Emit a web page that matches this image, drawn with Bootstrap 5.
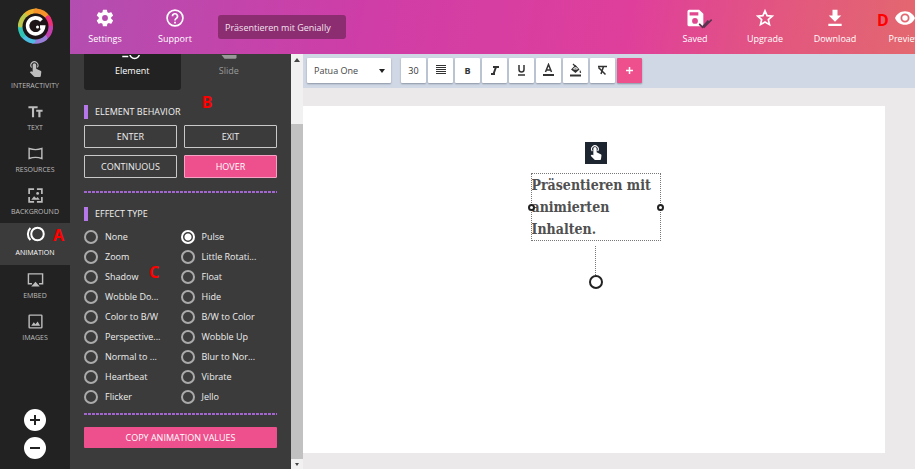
<!DOCTYPE html>
<html lang="en">
<head>
<meta charset="utf-8">
<meta name="viewport" content="width=device-width, initial-scale=1">
<title>Präsentieren mit Genially</title>
<link href="https://cdn.jsdelivr.net/npm/bootstrap@5.3.0/dist/css/bootstrap.min.css" rel="stylesheet">
<style>
body{font-family:"Open Sans","Noto Sans",sans-serif;font-size:9px;line-height:14px;background:#ebe9ea;color:#eee}
.btn{font-size:9px;line-height:14px}
svg{display:block;fill:none;stroke:currentColor;stroke-width:2}
svg .solid{fill:currentColor;stroke:none}
.rail{width:70px;background:#222}
.logo{height:55px}
.rail-item{height:42px;padding-top:6px;color:#bdbdbd;font-size:7px;line-height:10px;text-decoration:none;gap:3px}
.rail-item svg{height:17px}
.rail-item.current{background:#3b3b3b;color:#fff;gap:4px;padding-top:1px}
.rail-item.current svg{height:20px}
.zooms{gap:6px;padding-bottom:10px}
.zoom-btn{width:22px;height:22px;background:#fff;color:#222}
.topbar{height:54px;background:linear-gradient(100deg,#b34eb0 0%,#cf3da7 35%,#df3f9b 66%,#e2577f 84%,#e3686f 100%)}
.top-item{width:70px;height:54px;color:#fff;text-decoration:none;padding-top:8px;gap:4px}
.top-end{margin-right:-25px}
.doc-title{width:128px;height:24px;border:0;border-radius:3px;background:#8b2d70;color:#f5e3f0;padding:0 7px;margin-left:8px}
.note{position:absolute;color:#f00;font:bold 16px/16px "Noto Sans",sans-serif}
.note-a{left:53px;top:4px}
.note-b{right:-32px;top:-11px}
.note-c{left:65px;top:37px}
.note-d{left:7px;top:12px}
.panel{width:221px;background:#3b3b3b;padding:0 14px}
.tab-btn{height:36px;color:#999;padding:0 0 11px;gap:3px}
.tab-btn.chosen{background:#222;color:#fff;border-radius:0 0 3px 3px}
.tab-btn svg{height:8px}
.sect{font-size:9px;line-height:14px;border-left:4px solid #b677ea;padding-left:7px;color:#f0f0f0}
.sect-top{margin-top:15px}
.behaviors{gap:7px}
.behaviors-top{margin-top:6px}
.line-btn{height:23px;border:1px solid #c9c9c9;border-radius:1px;color:#eee}
.pink{background:#ee4f8d;color:#fff}
.line-btn.pink{border-color:#f7a2c4}
.dashes{height:2px;background:repeating-linear-gradient(90deg,#a266cf 0 3px,transparent 3px 4px)}
.dashes-top{margin:13px 0 14px}
.dashes-end{margin:6px 0 12px}
.effects{display:grid;grid-template-columns:1fr 1fr}
.effects label{height:20px;gap:7px}
.effects input{appearance:none;width:14px;height:14px;border:2px solid #aaa;border-radius:50%;margin:0}
.effects input:checked{border-color:#fff;background:radial-gradient(#fff 3px,transparent 4px)}
.sect-fx{margin-bottom:6px}
.copy-btn{height:21px;border-radius:1px}
.track{width:12px;background:#f1f1f1;color:#444}
.thumb{background:#c1c1c1;margin-top:60px}
.track svg{width:12px;height:10px}
.tools{height:34px;background:#d0d8e5;padding:4px;gap:2px}
.tool{width:25px;height:25px;background:#fff;color:#333;border-radius:1px;box-shadow:0 1px 2px #8a93a3;line-height:24px}
.tool svg{width:15px;height:15px}
.tool.pink{background:#ee4f8d;color:#fff}
.font-pick{width:84px;height:25px;border:0;border-radius:1px;box-shadow:0 1px 2px #8a93a3;color:#444;padding:0 7px;appearance:none;background:#fff}
.picker::after{content:"";position:absolute;right:6px;top:11px;border:3px solid transparent;border-top:4px solid #222;border-bottom:0;pointer-events:none}
.slide{margin:18px 30px 16px 0;padding:36px 0 0 3px}
.touch{width:22px;height:22px;background:#1d2530;color:#fff}
.text-box{width:130px;margin-top:9px;border:1px dotted #777;color:#505050;font:bold 14px/22px "DejaVu Serif Condensed","DejaVu Serif",serif}
.grip{position:absolute;top:50%;width:7px;height:7px;margin-top:-3px;border:2px solid #222;border-radius:50%;background:#fff}
.grip-l{left:-4px}
.grip-r{right:-4px}
.stem{height:29px;border-left:1px dotted #777;margin-top:5px}
.spin{width:14px;height:14px;border:2px solid #222;border-radius:50%}
</style>
</head>
<body class="d-flex vh-100 overflow-hidden">
<svg width="0" height="0" class="position-absolute" aria-hidden="true">
  <symbol id="hand" viewBox="0 0 24 24"><path class="solid" d="M8 10V5.500a2.500 2.500 0 0 1 5 0V11l6 2.700c1 .5 1.300 1 1.200 2L19.500 21c-.2 1-.8 1.600-2 1.600h-6c-1 0-1.500-.4-2-1L4 16l1-1c.4-.4.9-.4 1.400-.3L8 15.200z"/><path d="M6.500 9.200a5 5 0 1 1 8-.2" stroke-width="1.600"/></symbol>
</svg>

<nav class="rail d-flex flex-column flex-shrink-0" aria-label="Tools">
  <a href="#" class="logo d-flex justify-content-center pt-2" aria-label="Genially">
    <svg width="37" height="37" viewBox="0 0 37 37">
      <g stroke-width="5" stroke-linecap="round">
        <path d="M8 8A15 15 0 0 1 19 3" stroke="#f0b02e"/><path d="M19 3A15 15 0 0 1 31 10" stroke="#f7932a"/>
        <path d="M31 10A15 15 0 0 1 33.500 20" stroke="#ec2f77"/><path d="M33.500 20A15 15 0 0 1 28 30" stroke="#c43fae"/>
        <path d="M28 30A15 15 0 0 1 16 33" stroke="#977fd8"/><path d="M16 33A15 15 0 0 1 6 27" stroke="#4bbde0"/>
        <path d="M6 27A15 15 0 0 1 3.500 17" stroke="#2fc3b5"/><path d="M3.500 17A15 15 0 0 1 8 8" stroke="#bcc849"/>
      </g>
      <circle cx="18.500" cy="18.500" r="13" fill="#1d1418" stroke="none"/>
      <path d="M24.500 12.500A8 8 0 1 0 26.500 19H23" stroke="#fff" stroke-width="3.600"/><circle cx="20.500" cy="19" r="1.500" fill="#fff" stroke="none"/>
    </svg>
  </a>
  <a href="#" class="rail-item d-flex flex-column align-items-center"><svg width="17" viewBox="0 0 24 24"><use href="#hand"/></svg>INTERACTIVITY</a>
  <a href="#" class="rail-item d-flex flex-column align-items-center"><svg width="17" viewBox="0 0 24 24"><path stroke-width="3" d="M2 6h13M8.500 6v14M13 11h9M17.500 11v9"/></svg>TEXT</a>
  <a href="#" class="rail-item d-flex flex-column align-items-center"><svg width="17" viewBox="0 0 24 24"><path d="M3 5q9 3 18 0v14q-9-3-18 0z"/></svg>RESOURCES</a>
  <a href="#" class="rail-item d-flex flex-column align-items-center"><svg width="17" viewBox="0 0 24 24"><path stroke-width="2.400" d="M10 3H3v7M14 3h7v7M3 14v7h7M21 14v7h-7"/><path class="solid" d="m6 18 4-5 3 3 2-2 3 4z"/><circle class="solid" cx="15" cy="9" r="2"/></svg>BACKGROUND</a>
  <div class="position-relative">
    <a href="#" class="rail-item current d-flex flex-column align-items-center" aria-current="page"><svg width="20" viewBox="0 0 24 24"><circle cx="15" cy="12" r="7.500" stroke-width="2.400"/><path stroke-width="2.400" d="M6.500 4.800a10 10 0 0 0 0 14.400"/></svg>ANIMATION</a>
    <span class="note note-a">A</span>
  </div>
  <a href="#" class="rail-item d-flex flex-column align-items-center"><svg width="17" viewBox="0 0 24 24"><path d="M7 18H2V4h20v14h-5"/><path class="solid" d="m6 22 6-7 6 7z"/></svg>EMBED</a>
  <a href="#" class="rail-item d-flex flex-column align-items-center"><svg width="17" viewBox="0 0 24 24"><rect x="3" y="3" width="18" height="18" rx="1"/><path class="solid" d="m6 18 3.500-5 2.500 3 3-4 3.500 6z"/></svg>IMAGES</a>
  <div class="zooms mt-auto d-flex flex-column align-items-center">
    <button class="btn zoom-btn rounded-circle p-0 d-flex align-items-center justify-content-center" aria-label="Zoom in"><svg width="12" height="12" viewBox="0 0 12 12"><path d="M6 1v10M1 6h10"/></svg></button>
    <button class="btn zoom-btn rounded-circle p-0 d-flex align-items-center justify-content-center" aria-label="Zoom out"><svg width="12" height="12" viewBox="0 0 12 12"><path d="M1 6h10"/></svg></button>
  </div>
</nav>

<div class="d-flex flex-column flex-grow-1 overflow-hidden">
  <header class="topbar d-flex align-items-center flex-shrink-0 overflow-hidden">
    <a href="#" class="top-item d-flex flex-column align-items-center"><svg width="20" height="20" viewBox="0 0 24 24"><path class="solid" fill-rule="evenodd" d="M19.400 13a7.500 7.500 0 0 0 0-2l2.100-1.700a.5.500 0 0 0 .1-.6l-2-3.500a.5.500 0 0 0-.6-.2l-2.500 1a7.300 7.300 0 0 0-1.700-1l-.4-2.600a.5.500 0 0 0-.5-.4h-4a.5.500 0 0 0-.5.400L9 5a7.300 7.300 0 0 0-1.700 1l-2.500-1a.5.500 0 0 0-.6.200l-2 3.500a.5.500 0 0 0 .1.600L4.500 11a7.500 7.500 0 0 0 0 2l-2.200 1.700a.5.500 0 0 0-.1.600l2 3.500c.1.200.4.300.6.200l2.500-1c.5.400 1.100.7 1.700 1l.4 2.600c0 .2.200.4.500.4h4c.3 0 .5-.2.500-.4l.4-2.600a7.300 7.300 0 0 0 1.700-1l2.500 1c.2.100.5 0 .6-.2l2-3.500a.5.500 0 0 0-.1-.6zM12 15.500a3.500 3.500 0 1 1 0-7 3.500 3.500 0 0 1 0 7z"/></svg>Settings</a>
    <a href="#" class="top-item d-flex flex-column align-items-center"><svg width="20" height="20" viewBox="0 0 24 24"><circle cx="12" cy="12" r="9.500"/><path d="M9 10a3 3 0 1 1 4.500 2.500Q12 13.500 12 15M12 16.500v2"/></svg>Support</a>
    <input class="doc-title" type="text" value="Präsentieren mit Genially" aria-label="Title">
    <div class="top-end d-flex flex-shrink-0 ms-auto">
      <a href="#" class="top-item d-flex flex-column align-items-center"><svg width="20" height="20" viewBox="0 0 24 24" overflow="visible"><path class="solid" fill-rule="evenodd" d="M5 2h12l5 5v13a2 2 0 0 1-2 2H5a2 2 0 0 1-2-2V4q0-2 2-2zM5.500 5v4H16V5zM12 12a3.500 3.500 0 1 0 0 7 3.500 3.500 0 0 0 0-7z"/><path d="m17 19 4 4 7-8M22 22l1 1 9-9" stroke="#5c3350"/></svg>Saved</a>
      <a href="#" class="top-item d-flex flex-column align-items-center"><svg width="20" height="20" viewBox="0 0 24 24"><path d="m12 3.500 2.500 5.700 6.200.6-4.700 4.100 1.400 6.100-5.400-3.200L6.600 20 8 13.900 3.300 9.800l6.200-.6z"/></svg>Upgrade</a>
      <a href="#" class="top-item d-flex flex-column align-items-center"><svg width="20" height="20" viewBox="0 0 24 24"><path class="solid" d="M9 2h6v7h4.500L12 16.500 4.500 9H9zM4 19h16v2.500H4z"/></svg>Download</a>
      <div class="position-relative">
        <a href="#" class="top-item d-flex flex-column align-items-center"><svg width="22" height="20" viewBox="1 1 22 22"><path class="solid" fill-rule="evenodd" d="M12 4.500C7 4.500 2.700 7.600 1 12c1.700 4.400 6 7.500 11 7.500s9.300-3.100 11-7.500c-1.700-4.400-6-7.500-11-7.500zM12 17a5 5 0 1 1 0-10 5 5 0 0 1 0 10zm0-8a3 3 0 1 0 0 6 3 3 0 0 0 0-6z"/></svg>Preview</a>
        <span class="note note-d">D</span>
      </div>
    </div>
  </header>

  <div class="d-flex flex-grow-1 overflow-hidden">
    <aside class="panel flex-shrink-0">
      <div class="d-flex">
        <button class="btn tab-btn chosen w-50 d-flex flex-column align-items-center justify-content-end"><svg width="28" viewBox="0 0 28 8"><path d="M1 2h8M11-2a6 6 0 0 0 13 0"/></svg><span>Element</span></button>
        <button class="btn tab-btn w-50 d-flex flex-column align-items-center justify-content-end"><svg width="20" viewBox="0 0 20 8"><path class="solid" d="M0 0h20v3q0 2-2 2H4z"/></svg><span>Slide</span></button>
      </div>
      <h2 class="sect sect-top mb-0 position-relative d-table">ELEMENT BEHAVIOR<span class="note note-b">B</span></h2>
      <div class="behaviors behaviors-top d-flex flex-column">
        <div class="behaviors d-flex">
          <button class="btn line-btn p-0 w-50">ENTER</button><button class="btn line-btn p-0 w-50">EXIT</button>
        </div>
        <div class="behaviors d-flex">
          <button class="btn line-btn p-0 w-50">CONTINUOUS</button><button class="btn line-btn pink p-0 w-50">HOVER</button>
        </div>
      </div>
      <div class="dashes dashes-top"></div>
      <h2 class="sect sect-fx">EFFECT TYPE</h2>
      <div class="position-relative">
        <div class="effects">
          <label class="d-flex align-items-center"><input type="radio" name="fx">None</label>
          <label class="d-flex align-items-center"><input type="radio" name="fx" checked>Pulse</label>
          <label class="d-flex align-items-center"><input type="radio" name="fx">Zoom</label>
          <label class="d-flex align-items-center"><input type="radio" name="fx">Little Rotati...</label>
          <label class="d-flex align-items-center"><input type="radio" name="fx">Shadow</label>
          <label class="d-flex align-items-center"><input type="radio" name="fx">Float</label>
          <label class="d-flex align-items-center"><input type="radio" name="fx">Wobble Do...</label>
          <label class="d-flex align-items-center"><input type="radio" name="fx">Hide</label>
          <label class="d-flex align-items-center"><input type="radio" name="fx">Color to B/W</label>
          <label class="d-flex align-items-center"><input type="radio" name="fx">B/W to Color</label>
          <label class="d-flex align-items-center"><input type="radio" name="fx">Perspective...</label>
          <label class="d-flex align-items-center"><input type="radio" name="fx">Wobble Up</label>
          <label class="d-flex align-items-center"><input type="radio" name="fx">Normal to ...</label>
          <label class="d-flex align-items-center"><input type="radio" name="fx">Blur to Nor...</label>
          <label class="d-flex align-items-center"><input type="radio" name="fx">Heartbeat</label>
          <label class="d-flex align-items-center"><input type="radio" name="fx">Vibrate</label>
          <label class="d-flex align-items-center"><input type="radio" name="fx">Flicker</label>
          <label class="d-flex align-items-center"><input type="radio" name="fx">Jello</label>
        </div>
        <span class="note note-c">C</span>
      </div>
      <div class="dashes dashes-end"></div>
      <button class="btn pink copy-btn w-100 p-0">COPY ANIMATION VALUES</button>
    </aside>
    <div class="track d-flex flex-column flex-shrink-0" aria-hidden="true">
      <svg viewBox="0 0 12 10"><path class="solid" d="m3 8 3-4 3 4z"/></svg>
      <div class="thumb flex-grow-1"></div>
      <svg viewBox="0 0 12 10"><path class="solid" d="m4 4 2 3 2-3z"/></svg>
    </div>

    <main class="d-flex flex-column flex-grow-1">
      <div class="tools d-flex flex-shrink-0" role="toolbar" aria-label="Text format">
        <div class="picker position-relative me-2"><select class="font-pick" aria-label="Font"><option>Patua One</option></select></div>
        <button class="btn tool p-0" aria-label="Font size 30">30</button>
        <button class="btn tool p-0 d-flex align-items-center justify-content-center" aria-label="Justify"><svg viewBox="0 0 15 15"><path stroke-width="1" d="M3 2.500h10M3 4.500h10M3 6.500h10M3 8.500h10M3 10.500h10"/></svg></button>
        <button class="btn tool p-0 fw-bold" aria-label="Bold">B</button>
        <button class="btn tool p-0 d-flex align-items-center justify-content-center" aria-label="Italic"><svg viewBox="0 0 15 15"><path d="M6 4h6M4 11h4M9 4l-2.500 7"/></svg></button>
        <button class="btn tool p-0 d-flex align-items-center justify-content-center" aria-label="Underline"><svg viewBox="0 0 15 15"><path stroke-width="1.500" d="M5 2v4.500a2.500 2.500 0 0 0 5 0V2M4 12h7"/></svg></button>
        <button class="btn tool p-0 d-flex align-items-center justify-content-center" aria-label="Text colour"><svg viewBox="0 0 15 15"><path stroke-width="1.500" d="m4.500 9 3-7.500 3 7.500M5.500 7h4"/><path d="M2 12h11"/></svg></button>
        <button class="btn tool p-0 d-flex align-items-center justify-content-center" aria-label="Fill colour"><svg viewBox="0 0 15 15"><path d="M2 12.500h11"/><path class="solid" d="M3 6.500 7.500 2l4 4.500L7.500 10zM12 7q2 3 .5 3T12 7z"/><path stroke-width="1.200" d="m5 1 3 3"/><path stroke="#fff" stroke-width="1" d="m5.500 6 2-2 2 2z"/></svg></button>
        <button class="btn tool p-0 d-flex align-items-center justify-content-center" aria-label="Clear format"><svg viewBox="0 0 15 15"><path stroke-width="1.500" d="M3 3.500h9M8.500 3.500 6 11M3.500 4.500l7 7"/></svg></button>
        <button class="btn tool pink p-0 d-flex align-items-center justify-content-center" aria-label="Add"><svg viewBox="0 0 15 15"><path stroke-width="1.500" d="M7.500 4v7M4 7.500h7"/></svg></button>
      </div>
      <section class="slide bg-white flex-grow-1 d-flex flex-column align-items-center">
        <button class="btn touch rounded-0 p-0 d-flex align-items-center justify-content-center" aria-label="Interactivity"><svg width="16" height="16"><use href="#hand"/></svg></button>
        <div class="text-box position-relative">Präsentieren mit animierten Inhalten.<span class="grip grip-l"></span><span class="grip grip-r"></span></div>
        <div class="stem"></div>
        <div class="spin"></div>
      </section>
    </main>
  </div>
</div>
<script src="https://cdn.jsdelivr.net/npm/bootstrap@5.3.0/dist/js/bootstrap.bundle.min.js"></script>
</body>
</html>
